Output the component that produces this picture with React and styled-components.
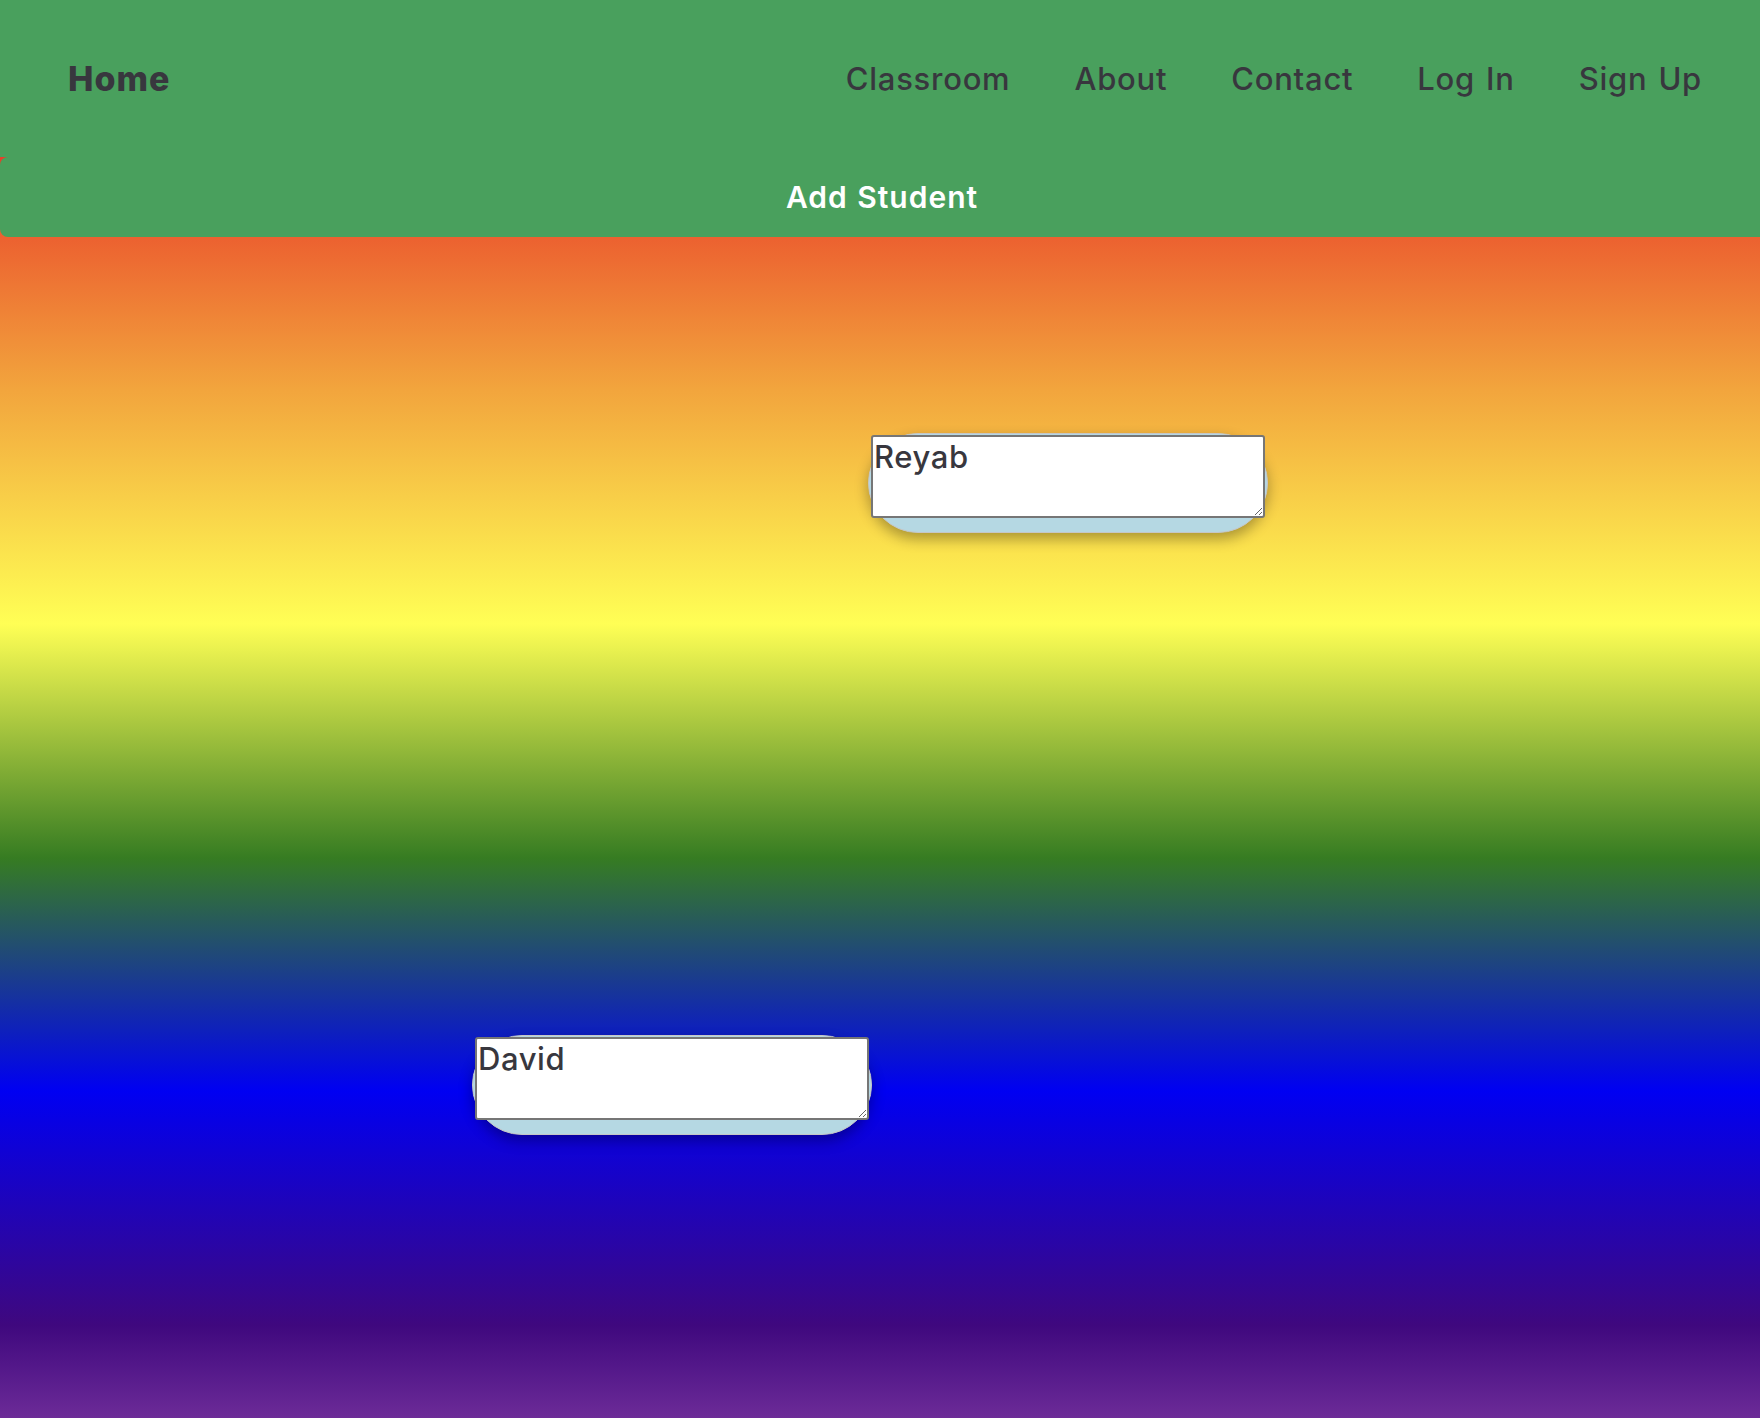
import React from 'react';
import styled, { createGlobalStyle } from 'styled-components';

const GlobalStyle = createGlobalStyle`
  html, body {
    margin: 0;
    padding: 0;
    height: 100%;
    overflow: hidden;
    background: #e93e29;
  }
  body {
    font-family: "Inter", "Noto Sans", sans-serif;
  }
  #root {
    height: 100%;
  }
`;

const Page = styled.div`
  height: 1418px;
  display: flex;
  flex-direction: column;
`;

const NavBar = styled.nav`
  height: 157px;
  flex-shrink: 0;
  background: #49a05d;
  display: flex;
  align-items: center;
  justify-content: space-between;
  padding: 0 58px 0 68px;
  box-sizing: border-box;
`;

const Brand = styled.a`
  font-size: 34px;
  font-weight: 800;
  color: #38373e;
  text-decoration: none;
  letter-spacing: 1px;
`;

const Links = styled.div`
  display: flex;
  align-items: center;
  gap: 64px;
`;

const NavLink = styled.a`
  font-size: 31px;
  font-weight: 500;
  color: #38373e;
  text-decoration: none;
  letter-spacing: 0.75px;
  word-spacing: 2px;
`;

// gradient runs from the top of the sub bar, its last stop lies below the fold
const Stage = styled.div`
  flex: 1;
  display: flex;
  flex-direction: column;
  background: linear-gradient(
    to bottom,
    #e93e29 0px,
    #f2a53d 233px,
    #ffff55 467px,
    #367c22 701px,
    #0000f2 934px,
    #3f087e 1168px,
    #b060be 1402px
  );
`;

const SubBar = styled.div`
  height: 80px;
  flex-shrink: 0;
  background: #49a05d;
  border-radius: 8px 0 0 8px;
  display: flex;
  align-items: center;
  justify-content: center;
`;

const AddButton = styled.button`
  background: none;
  border: none;
  padding: 0;
  margin-left: 4px;
  font-family: "Inter", "Noto Sans", sans-serif;
  font-size: 30px;
  font-weight: 600;
  letter-spacing: 1px;
  word-spacing: 1px;
  color: #ffffff;
  cursor: pointer;
`;

const Canvas = styled.div`
  position: relative;
  flex: 1;
`;

const StudentCard = styled.div`
  position: absolute;
  box-sizing: border-box;
  width: 400px;
  height: 100px;
  padding: 1px 2px 0;
  background: #b5d8e3;
  border: 1px solid #c6c6c6;
  border-radius: 50px;
  box-shadow: 0 6px 14px rgba(0, 0, 0, 0.32);
`;

const NameField = styled.textarea`
  display: block;
  box-sizing: border-box;
  width: 394px;
  height: 83px;
  margin: 0;
  padding: 1px;
  border: 2px solid #767676;
  border-radius: 3px;
  background: #ffffff;
  font-family: "Inter", "Noto Sans", sans-serif;
  font-size: 31px;
  font-weight: 500;
  letter-spacing: 0.6px;
  line-height: 1.2;
  color: #38373e;
`;

const students = [
  { id: 1, name: 'Reyab', x: 868, y: 196 },
  { id: 2, name: 'David', x: 472, y: 798 },
];

export default function App() {
  return (
    <Page>
      <GlobalStyle />
      <NavBar>
        <Brand href="#">Home</Brand>
        <Links>
          <NavLink href="#">Classroom</NavLink>
          <NavLink href="#">About</NavLink>
          <NavLink href="#">Contact</NavLink>
          <NavLink href="#">Log In</NavLink>
          <NavLink href="#">Sign Up</NavLink>
        </Links>
      </NavBar>
      <Stage>
        <SubBar>
          <AddButton>Add Student</AddButton>
        </SubBar>
        <Canvas>
          {students.map((s) => (
            <StudentCard key={s.id} style={{ left: s.x, top: s.y }}>
              <NameField defaultValue={s.name} />
            </StudentCard>
          ))}
        </Canvas>
      </Stage>
    </Page>
  );
}
